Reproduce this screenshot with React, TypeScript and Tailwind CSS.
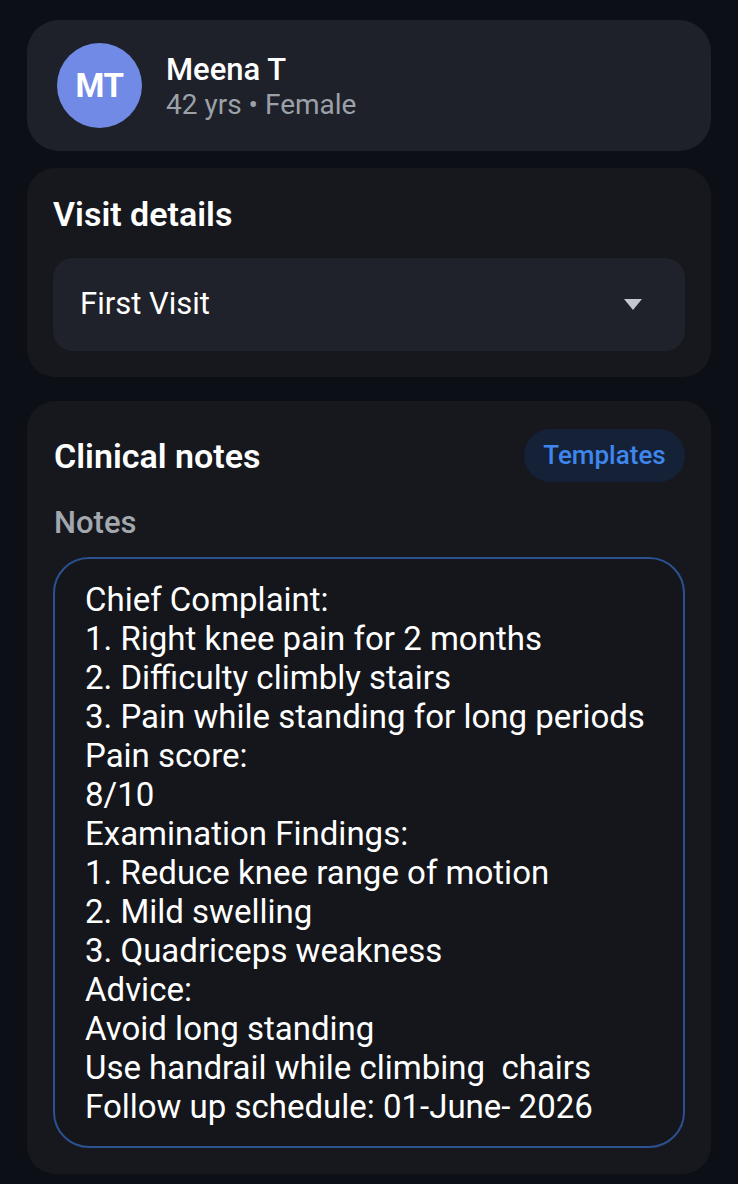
const NOTES = [
  'Chief Complaint:',
  '1. Right knee pain for 2 months',
  '2. Difficulty climbly stairs',
  '3. Pain while standing for long periods',
  'Pain score:',
  '8/10',
  'Examination Findings:',
  '1. Reduce knee range of motion',
  '2. Mild swelling',
  '3. Quadriceps weakness',
  'Advice:',
  'Avoid long standing',
  'Use handrail while climbing  chairs',
  'Follow up schedule: 01-June- 2026',
];

export default function App() {
  return (
    <div
      className="min-h-[1184px] bg-[#0c0f16] px-[27px] pt-[20px] pb-[9px] flex flex-col"
      style={{ fontFamily: 'Roboto, "Noto Sans", sans-serif' }}
    >
      <PatientCard />
      <VisitCard />
      <NotesCard />
    </div>
  );
}

function PatientCard() {
  return (
    <div className="rounded-[32px] bg-[#1e2129] h-[131px] px-[30px] flex items-center gap-[24px]">
      <div className="w-[85px] h-[85px] rounded-full bg-[#718ae6] flex items-center justify-center text-white text-[33px] font-bold tracking-[-0.5px]">
        MT
      </div>
      <div className="flex flex-col pt-[2px]">
        <div className="text-white text-[31px] font-medium leading-[35px]">Meena T</div>
        <div className="text-[#9ca0a8] text-[28px] leading-[35px]">42 yrs • Female</div>
      </div>
    </div>
  );
}

function VisitCard() {
  return (
    <div className="mt-[17px] rounded-[28px] bg-[#16181e] px-[26px] pt-[27px] pb-[26px] flex flex-col gap-[25px]">
      <h2 className="text-white text-[34px] font-semibold leading-[38px]">Visit details</h2>
      <button className="h-[93px] rounded-[20px] bg-[#1f222a] px-[27px] flex items-center justify-between text-left">
        <span className="text-white text-[31px]">First Visit</span>
        <span className="w-0 h-0 border-l-[9px] border-r-[9px] border-t-[11px] border-l-transparent border-r-transparent border-t-[#c4c7cd] mr-[16px]" />
      </button>
    </div>
  );
}

function NotesCard() {
  return (
    <div className="mt-[24px] rounded-[28px] bg-[#16181e] px-[26px] pt-[28px] pb-[26px] flex flex-col">
      <div className="flex items-center justify-between h-[53px]">
        <h2 className="text-white text-[34px] font-semibold leading-[38px] pl-px">Clinical notes</h2>
        <button className="h-[53px] w-[161px] rounded-full bg-[#152136] text-[#3f86ee] text-[26px] font-medium">
          Templates
        </button>
      </div>
      <div className="mt-[24px] text-[#a3a7ae] text-[31px] font-medium leading-[34px] pl-px">Notes</div>
      <div className="mt-[17px] rounded-[36px] border-2 border-[#2b5190] bg-[#14161b] pl-[30px] pr-[16px] pt-[21px] pb-[20px]">
        {NOTES.map((line, i) => (
          <div key={i} className="text-white text-[33px] leading-[39px] whitespace-pre">
            {line}
          </div>
        ))}
      </div>
    </div>
  );
}
